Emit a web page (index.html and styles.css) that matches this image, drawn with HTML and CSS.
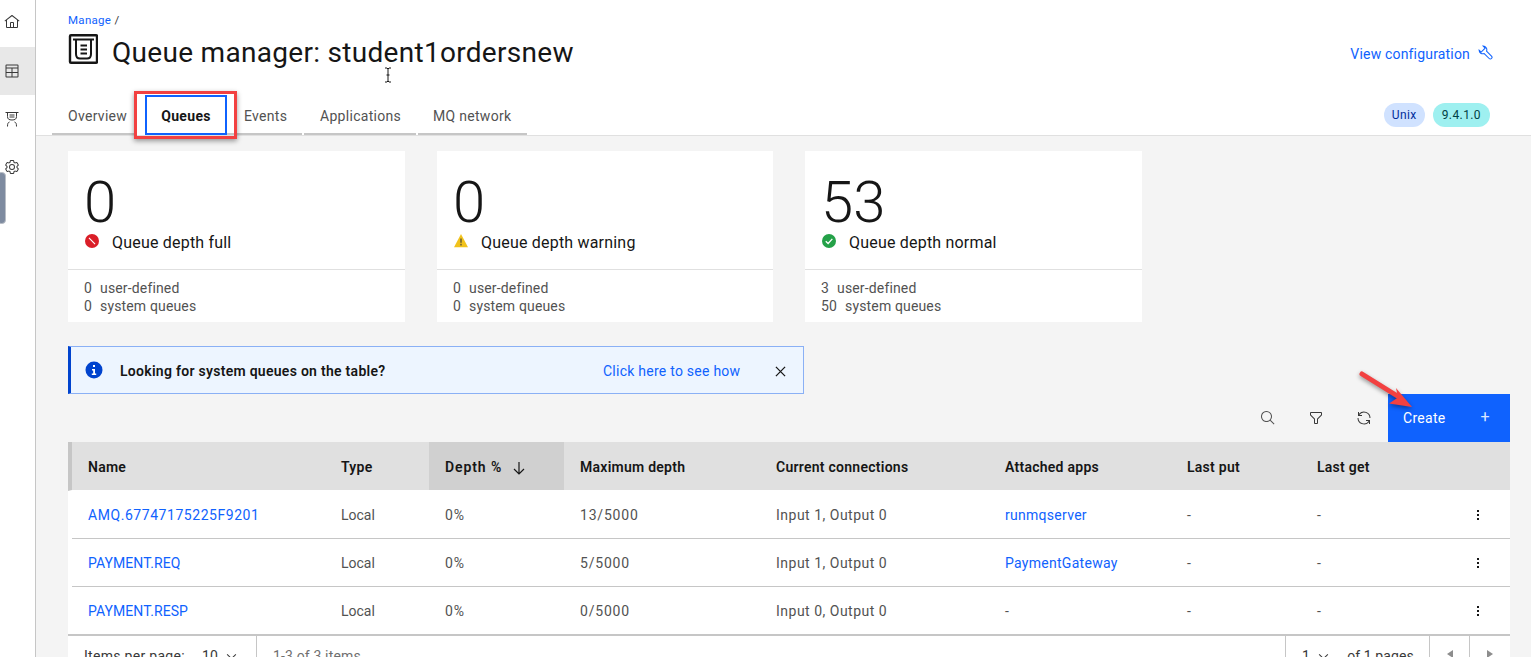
FILE: index.html
```html
<!DOCTYPE html>
<html lang="en">
<head>
<meta charset="utf-8">
<title>Queue manager: student1ordersnew</title>
<link rel="stylesheet" href="styles.css">
</head>
<body>
<div class="app">
  <nav class="rail">
    <a class="rail-item"><svg class="ico" viewBox="0 0 32 32"><path d="M16.6123,2.2138a1.01,1.01,0,0,0-1.2427,0L1,13.4194l1.2427,1.5717L4,13.6209V26a2.0041,2.0041,0,0,0,2,2H26a2.0037,2.0037,0,0,0,2-2V13.63L29.7573,15,31,13.4282ZM18,26H14V18h4Zm2,0V18a2.0023,2.0023,0,0,0-2-2H14a2.002,2.002,0,0,0-2,2v8H6V12.0615l10-7.79,10,7.8005V26Z"/></svg></a>
    <a class="rail-item rail-active"><svg class="ico" viewBox="0 0 32 32"><path d="M27,3H5A2,2,0,0,0,3,5V27a2,2,0,0,0,2,2H27a2,2,0,0,0,2-2V5A2,2,0,0,0,27,3Zm0,2V9H5V5ZM17,11H27v7H17Zm-2,7H5V11H15ZM5,20H15v7H5Zm12,7V20H27v7Z"/></svg></a>
    <a class="rail-item"><svg class="ico" viewBox="0 0 32 32"><path class="line" d="M3 3H29M7 3V11C7 16 10 18 16 18S25 16 25 11V3M11 8H21M11 12H21M7 31C7 25 8 23 11 22M25 31C25 25 24 23 21 22"/></svg></a>
    <a class="rail-item"><svg class="ico" viewBox="0 0 32 32"><path d="M27,16.76c0-.25,0-.5,0-.76s0-.51,0-.77l1.92-1.68A2,2,0,0,0,29.3,11L26.94,7a2,2,0,0,0-1.73-1,2,2,0,0,0-.64.1l-2.43.82a11.35,11.35,0,0,0-1.31-.75l-.51-2.52a2,2,0,0,0-2-1.61H13.64a2,2,0,0,0-2,1.61l-.51,2.52a11.48,11.48,0,0,0-1.32.75L7.43,6.06A2,2,0,0,0,6.79,6,2,2,0,0,0,5.06,7L2.7,11a2,2,0,0,0,.41,2.51L5,15.24c0,.25,0,.5,0,.76s0,.51,0,.77L3.11,18.45A2,2,0,0,0,2.7,21L5.06,25a2,2,0,0,0,1.73,1,2,2,0,0,0,.64-.1l2.43-.82a11.35,11.35,0,0,0,1.31.75l.51,2.52a2,2,0,0,0,2,1.61h4.72a2,2,0,0,0,2-1.61l.51-2.52a11.48,11.48,0,0,0,1.32-.75l2.42.82a2,2,0,0,0,.64.1,2,2,0,0,0,1.73-1L29.3,21a2,2,0,0,0-.41-2.51ZM25.21,24l-3.43-1.16a8.86,8.86,0,0,1-2.71,1.57L18.36,28H13.64l-.71-3.55a9.36,9.36,0,0,1-2.7-1.57L6.79,24,4.43,20l2.72-2.4a8.9,8.9,0,0,1,0-3.13L4.43,12,6.79,8l3.43,1.16a8.86,8.86,0,0,1,2.71-1.57L13.64,4h4.72l.71,3.55a9.36,9.36,0,0,1,2.7,1.57L25.21,8,27.57,12l-2.72,2.4a8.9,8.9,0,0,1,0,3.13L27.57,20Z"/><path d="M16,22a6,6,0,1,1,6-6A5.94,5.94,0,0,1,16,22Zm0-10a3.91,3.91,0,0,0-4,4,3.91,3.91,0,0,0,4,4,3.91,3.91,0,0,0,4-4A3.91,3.91,0,0,0,16,12Z"/></svg></a>
    <div class="rail-thumb"></div>
  </nav>
  <main class="main">
    <header class="head">
      <div class="crumb"><a class="link">Manage</a> /</div>
      <div class="title-row">
        <div class="title-left">
          <svg class="title-ico" viewBox="0 0 30 30"><rect x="2" y="1.2" width="27" height="27.6" rx="1" class="title-box"/><path class="title-glyph" d="M5 5.5H26M8 5.5V20C8 23 9.5 24.5 12 24.5H19C21.5 24.5 23 23 23 20V5.5M12.5 11.5H19M12.5 15.5H19M12.5 19.5H19"/></svg>
          <h1 class="title">Queue manager: student1ordersnew</h1>
        </div>
        <a class="config link">View configuration <svg class="wrench" viewBox="0 0 16 16"><path d="M5.5 1.2A3.9 3.9 0 0 1 9.1 6.6L14.4 11.9A1.7 1.7 0 0 1 11.9 14.4L6.6 9.1A3.9 3.9 0 0 1 1.2 5.5L3.4 7.6L7.6 3.4Z"/></svg></a>
      </div>
      <div class="tab-row">
        <div class="tabs">
          <a class="tab tab-overview">Overview</a>
          <a class="tab tab-active">Queues</a>
          <a class="tab tab-events">Events</a>
          <a class="tab tab-apps">Applications</a>
          <a class="tab tab-net">MQ network</a>
        </div>
        <div class="tags"><span class="tag tag-blue">Unix</span><span class="tag tag-teal">9.4.1.0</span></div>
      </div>
    </header>

    <section class="cards">
      <article class="card">
        <div class="card-top">
          <div class="card-num">0</div>
          <div class="card-label"><svg class="status" viewBox="0 0 16 16"><circle cx="8" cy="8" r="8" fill="#da1e28"/><path d="M4.5 4.5L11.5 11.5" stroke="#fff" stroke-width="1.3"/></svg>Queue depth full</div>
        </div>
        <div class="card-foot"><div><span class="cnt">0</span>user-defined</div><div><span class="cnt">0</span>system queues</div></div>
      </article>
      <article class="card">
        <div class="card-top">
          <div class="card-num">0</div>
          <div class="card-label"><svg class="status" viewBox="0 0 16 16"><path d="M8 0L16 15H0Z" fill="#f1c21b"/><path d="M7.1 5H8.9V10H7.1ZM7.1 11H8.9V13H7.1Z" fill="#6f6230"/></svg>Queue depth warning</div>
        </div>
        <div class="card-foot"><div><span class="cnt">0</span>user-defined</div><div><span class="cnt">0</span>system queues</div></div>
      </article>
      <article class="card">
        <div class="card-top">
          <div class="card-num">53</div>
          <div class="card-label"><svg class="status" viewBox="0 0 16 16"><circle cx="8" cy="8" r="8" fill="#24a148"/><path d="M4.3 8.2L7 10.9L11.8 5.6" stroke="#fff" stroke-width="1.5" fill="none"/></svg>Queue depth normal</div>
        </div>
        <div class="card-foot"><div><span class="cnt">3</span>user-defined</div><div><span class="cnt">50</span>system queues</div></div>
      </article>
    </section>

    <section class="note">
      <svg class="note-ico" viewBox="0 0 18 18"><circle cx="9" cy="9" r="8.5" fill="#0043ce"/><path d="M8 4H10V6H8ZM7 8H10V12.5H11.2V14H6.8V12.5H8.2V9.5H7Z" fill="#fff"/></svg>
      <strong class="note-text">Looking for system queues on the table?</strong>
      <a class="link note-link">Click here to see how</a>
      <svg class="note-x" viewBox="0 0 12 12"><path d="M1 1L11 11M11 1L1 11"/></svg>
    </section>

    <section class="table-wrap">
      <div class="toolbar">
        <button class="tool"><svg class="ico ico-grey" viewBox="0 0 32 32"><path d="M29,27.5859l-7.5521-7.5521a11.0177,11.0177,0,1,0-1.4141,1.4141L27.5859,29ZM4,13a9,9,0,1,1,9,9A9.01,9.01,0,0,1,4,13Z"/></svg></button>
        <button class="tool"><svg class="ico" viewBox="0 0 32 32"><path d="M18,28H14a2,2,0,0,1-2-2V18.41L4.59,11A2,2,0,0,1,4,9.59V6A2,2,0,0,1,6,4H26a2,2,0,0,1,2,2V9.59A2,2,0,0,1,27.41,11L20,18.41V26A2,2,0,0,1,18,28ZM6,6V9.59l8,8V26h4V17.59l8-8V6Z"/></svg></button>
        <button class="tool"><svg class="ico" viewBox="0 0 32 32"><path d="M12,10H6.78A11,11,0,0,1,27,16h2A13,13,0,0,0,6,7.68V4H4v8h8Z"/><path d="M20,22h5.22A11,11,0,0,1,5,16H3a13,13,0,0,0,23,8.32V28h2V20H20Z"/></svg></button>
        <button class="create"><span>Create</span><span class="plus">+</span></button>
      </div>
      <table class="grid">
        <thead>
          <tr>
            <th class="c-name">Name</th><th class="c-type">Type</th><th class="c-depth sorted">Depth %<svg class="sort" viewBox="0 0 14 14"><path d="M7 1V13M2 8L7 13L12 8"/></svg></th><th class="c-max">Maximum depth</th><th class="c-conn">Current connections</th><th class="c-apps">Attached apps</th><th class="c-put">Last put</th><th class="c-get">Last get</th><th class="c-act"></th>
          </tr>
        </thead>
        <tbody>
          <tr><td class="c-name"><a class="link amq">AMQ.67747175225F9201</a></td><td>Local</td><td>0%</td><td>13/5000</td><td>Input 1, Output 0</td><td><a class="link">runmqserver</a></td><td>-</td><td>-</td><td class="c-act"><span class="kebab"><i></i><i></i><i></i></span></td></tr>
          <tr><td class="c-name"><a class="link">PAYMENT.REQ</a></td><td>Local</td><td>0%</td><td>5/5000</td><td>Input 1, Output 0</td><td><a class="link">PaymentGateway</a></td><td>-</td><td>-</td><td class="c-act"><span class="kebab"><i></i><i></i><i></i></span></td></tr>
          <tr><td class="c-name"><a class="link">PAYMENT.RESP</a></td><td>Local</td><td>0%</td><td>0/5000</td><td>Input 0, Output 0</td><td>-</td><td>-</td><td>-</td><td class="c-act"><span class="kebab"><i></i><i></i><i></i></span></td></tr>
        </tbody>
      </table>
      <footer class="pager">
        <div class="pg-size">Items per page:<span class="pg-val">10</span><svg class="chev" viewBox="0 0 12 8"><path d="M1 1.5L6 6.5L11 1.5"/></svg></div>
        <div class="pg-range">1-3 of 3 items</div>
        <div class="pg-pages"><span>1</span><svg class="chev" viewBox="0 0 12 8"><path d="M1 1.5L6 6.5L11 1.5"/></svg><span class="pg-of">of 1 pages</span></div>
        <div class="pg-btn"><span class="tri-l"></span></div>
        <div class="pg-btn"><span class="tri-r"></span></div>
      </footer>
    </section>
  </main>
</div>

<div class="mark-box"></div>
<svg class="mark-arrow" viewBox="0 0 60 50"><path d="M4 4L41 27" stroke="#f24141" stroke-width="5" stroke-linecap="round"/><path d="M54 37L31 33.5L40 27.5L38 18Z" fill="#f24141"/></svg>
<svg class="mark-cursor" viewBox="0 0 8 16"><path d="M1 1H3L4 2L5 1H7M4 2V14M1 15H3L4 14L5 15H7M2.5 8H5.5"/></svg>
</body>
</html>
```
FILE: styles.css
```css
* { box-sizing: border-box; }
html, body { margin: 0; height: 100%; overflow: hidden; }
body { font-family: Roboto, "Noto Sans", sans-serif; font-size: 14px; color: #161616; background: #f4f4f4; }
a { text-decoration: none; }
.link { color: #0f62fe; }
.app { display: flex; height: 657px; }

.rail { position: relative; width: 36px; flex: none; background: #fff; border-right: 1px solid #c6c6c6; display: flex; flex-direction: column; }
.rail-item { height: 48px; display: flex; align-items: center; justify-content: center; padding-right: 11px; }
.rail-item:first-child { height: 47px; padding-bottom: 4px; }
.rail-active { background: #e8e8e8; }
.rail-thumb { position: absolute; left: -3px; top: 172px; width: 9px; height: 52px; border-radius: 4px; background: #7e8ba0; border: 1px solid #b9bec6; }
.ico { width: 16px; height: 16px; fill: #393939; flex: none; }
.ico-grey { fill: #525252; }
.line { fill: none; stroke: #393939; stroke-width: 2; }

.main { flex: 1; min-width: 0; }
.head { height: 136px; background: #fff; border-bottom: 1px solid #e0e0e0; padding-left: 16px; display: flex; flex-direction: column; }
.crumb { padding: 13px 0 0 16px; font-size: 11.5px; line-height: 14px; color: #393939; letter-spacing: .3px; }
.title-row { display: flex; justify-content: space-between; align-items: center; padding: 9px 38px 0 16px; height: 42px; }
.title-left { display: flex; align-items: center; gap: 14px; }
.title-ico { width: 30px; height: 30px; margin-top: -8px; }
.title-box { fill: none; stroke: #161616; stroke-width: 2.4; }
.title-glyph { fill: none; stroke: #161616; stroke-width: 2; }
.title { margin: 0; font-size: 28px; font-weight: 400; line-height: 36px; color: #161616; letter-spacing: .3px; }
.config { display: flex; align-items: center; gap: 8px; font-size: 14px; margin-top: 3px; letter-spacing: .18px; }
.wrench { width: 15px; height: 15px; fill: none; stroke: #0f62fe; stroke-width: 1.1; margin-top: -3px; }

.tab-row { display: flex; justify-content: space-between; margin-top: 13px; flex: 1; }
.tabs { display: flex; align-self: flex-end; height: 39px; }
.tab { display: flex; align-items: center; height: 39px; border-bottom: 2px solid #c6c6c6; font-size: 14px; color: #525252; padding: 2px 16px 0; margin-right: 2px; letter-spacing: .3px; white-space: nowrap; }
.tab-overview { width: 84px; margin-right: 9px; }
.tab-active { width: 82px; height: 40px; margin-top: -1px; justify-content: center; font-weight: 700; color: #161616; border: 2px solid #0f62fe; margin-right: 0; padding-top: 1px; }
.tab-events { width: 75px; padding-left: 17px; }
.tab-apps { width: 112px; }
.tab-net { width: 109px; padding-left: 15px; }
.tags { display: flex; gap: 8px; padding: 21px 41px 0 0; }
.tag { height: 24px; border-radius: 12px; font-size: 12px; line-height: 24px; padding: 0 8px; letter-spacing: .4px; }
.tag-blue { background: #d0e2ff; color: #002d9c; }
.tag-teal { background: #9ef0f0; color: #004144; padding: 0 9px; }

.cards { display: grid; grid-template-columns: 337px 336px 337px; gap: 32px; width: 1074px; margin: 15px 0 0 32px; }
.card { height: 171px; background: #fff; display: flex; flex-direction: column; }
.card-top { height: 119px; border-bottom: 1px solid #e0e0e0; padding: 24px 16px 0 17px; }
.card-num { font-size: 58px; font-weight: 300; line-height: 54px; margin-left: -1px; }
.card-label { display: flex; align-items: center; font-size: 16px; line-height: 22px; margin-top: 3px; letter-spacing: .2px; }
.status { width: 14px; height: 14px; margin-right: 13px; margin-top: -5px; flex: none; }
.card-foot { padding: 9px 16px 0; font-size: 14px; line-height: 18px; color: #525252; letter-spacing: .15px; }
.cnt { margin-right: 8px; }

.note { display: flex; align-items: center; width: 736px; height: 48px; margin: 24px 0 0 32px; background: #edf5ff; border: 1px solid #8ab0f5; border-left: 3px solid #0043ce; padding-left: 14px; }
.note-ico { width: 18px; height: 18px; flex: none; }
.note-text { margin: 2px 0 0 17px; font-weight: 600; width: 483px; flex: none; letter-spacing: .28px; }
.note-link { width: 172px; flex: none; margin-top: 2px; letter-spacing: .25px; }
.note-x { width: 11px; height: 11px; fill: none; stroke: #161616; stroke-width: 1.4; margin-top: 3px; }

.table-wrap { margin: 0 21px 0 32px; }
.toolbar { display: flex; justify-content: flex-end; height: 48px; }
.tool { width: 48px; height: 48px; border: 0; background: none; padding: 0; display: flex; align-items: center; justify-content: center; }
.create { width: 122px; height: 48px; border: 0; background: #0f62fe; color: #fff; font: inherit; letter-spacing: .3px; display: flex; align-items: center; justify-content: space-between; padding: 0 20px 0 15px; }
.plus { font-size: 16px; line-height: 16px; color: #dbe6ff; margin-top: -3px; }

.grid { width: 100%; border-collapse: separate; border-spacing: 0; table-layout: fixed; background: #fff; }
.grid th { height: 49px; background: #e0e0e0; text-align: left; font-weight: 600; padding: 2px 0 0 16px; color: #161616; letter-spacing: .26px; border-bottom: 1px solid #fff; }
.grid td { height: 48px; padding: 0 0 0 16px; color: #525252; border-bottom: 1px solid #c6c6c6; }
.grid tr:last-child td { border-bottom: 0; }
.grid th:first-child { border-left: 4px solid #c6c6c6; width: 257px; padding-left: 16px; }
.grid td:first-child { position: relative; padding-left: 20px; border-bottom-color: #fff; letter-spacing: .08px; }
.grid tr:not(:last-child) td:first-child::after { content: ""; position: absolute; left: 4px; right: 0; bottom: -1px; height: 1px; background: #c6c6c6; }
.grid td:nth-child(3), .grid td:nth-child(4) { letter-spacing: .8px; }
.grid td:nth-child(5) { letter-spacing: .5px; }
.grid td:nth-child(6) { letter-spacing: .28px; }
.amq { letter-spacing: .55px; }
.c-type { width: 104px; }
.c-depth { width: 135px; }
.c-max { width: 196px; }
.c-conn { width: 229px; }
.c-apps { width: 182px; }
.c-put { width: 130px; }
.c-get { width: 137px; }
.sorted { background: #d0d0d0 !important; letter-spacing: .9px !important; }
.sort { width: 14px; height: 14px; margin-left: 10px; vertical-align: -3px; fill: none; stroke: #161616; stroke-width: 1.2; }
.c-act { padding: 0 !important; }
.kebab { display: flex; flex-direction: column; gap: 2px; width: 2px; margin-left: 39px; }
.kebab i { width: 2px; height: 2px; background: #161616; }

.pager { display: flex; height: 40px; background: #fff; border-top: 2px solid #c6c6c6; color: #393939; font-size: 14px; line-height: 20px; margin-top: -1px; letter-spacing: .3px; }
.pg-size { width: 189px; padding: 10px 0 0 16px; border-right: 1px solid #c6c6c6; flex: none; }
.pg-val { margin: 0 8px 0 17px; }
.chev { width: 11px; height: 7px; fill: none; stroke: #393939; stroke-width: 1.2; vertical-align: 1px; }
.pg-range { flex: 1; padding: 10px 0 0 16px; color: #6f6f6f; letter-spacing: .15px; }
.pg-pages { width: 145px; padding: 10px 0 0 16px; border-left: 1px solid #c6c6c6; border-right: 1px solid #c6c6c6; flex: none; }
.pg-pages .chev { margin-left: 8px; }
.pg-of { margin-left: 18px; letter-spacing: .1px; }
.pg-btn { width: 40px; flex: none; border-right: 1px solid #c6c6c6; display: flex; justify-content: center; padding-top: 14px; }
.pg-btn:last-child { border-right: 0; }
.tri-l { width: 0; height: 0; border: 4px solid transparent; border-right: 6px solid #8d8d8d; border-left: 0; }
.tri-r { width: 0; height: 0; border: 4px solid transparent; border-left: 6px solid #8d8d8d; border-right: 0; }

.mark-box { position: absolute; left: 134px; top: 91px; width: 103px; height: 48px; border: 3px solid #f24141; box-shadow: 0 2px 5px rgba(0,0,0,.4); }
.mark-arrow { position: absolute; left: 1358px; top: 370px; width: 60px; height: 50px; filter: drop-shadow(0 2px 2px rgba(0,0,0,.4)); }
.mark-cursor { position: absolute; left: 384px; top: 67px; width: 8px; height: 16px; fill: none; stroke: #161616; stroke-width: 1; }
```
